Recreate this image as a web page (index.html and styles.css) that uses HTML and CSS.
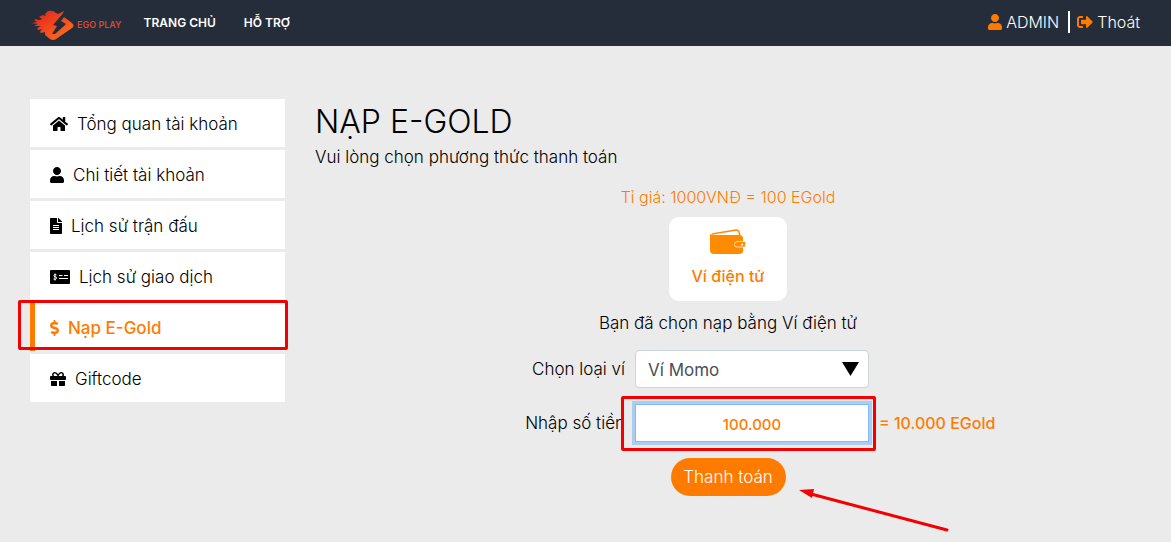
FILE: index.html
```html
<!DOCTYPE html>
<html lang="vi">
<head>
    <meta charset="UTF-8">
    <meta name="viewport" content="width=device-width, initial-scale=1.0">
    <title>Nạp E-Gold - EGO PLAY</title>
    <link rel="stylesheet" href="styles.css">
</head>
<body>
    <header class="navbar">
        <a class="logo" href="#">
            <svg class="logo-mark" viewBox="0 0 46 32" aria-hidden="true">
                <defs>
                    <linearGradient id="flame" x1="0" y1="0" x2="1" y2="1">
                        <stop offset="0" stop-color="#d9221c"/>
                        <stop offset="0.5" stop-color="#f2481f"/>
                        <stop offset="1" stop-color="#ff7a1c"/>
                    </linearGradient>
                </defs>
                <path fill="url(#flame)" d="M33 2L27 5L25 4Q22 1 17 2L14 5L15 7Q11 5 8 8L11 10Q8 12 5 10L3 11L6 13L0 14L7 15L3 17L10 17Q5 19 7 21L11 20Q8 23 10 24L14 23L14 26L19 30Q22 32 25 30L41 19Q44 17 41 14L33 8L30 9Z"/>
                <path fill="#262d3a" d="M34 2L22 16L26 17L21 25L24 25L33 17L35 15L30 12L33 8L31 7Z"/>
            </svg>
            <span>EGO PLAY</span>
        </a>
        <nav class="main-nav">
            <a href="#">TRANG CHỦ</a>
            <a href="#">HỖ TRỢ</a>
        </nav>
        <div class="user-nav">
            <a href="#">
                <svg class="icon" viewBox="0 0 448 512" aria-hidden="true"><path d="M224 256c70.700 0 128-57.300 128-128S294.700 0 224 0 96 57.300 96 128s57.300 128 128 128zm89.600 32h-16.700c-22.200 10.200-46.900 16-72.900 16s-50.600-5.800-72.900-16h-16.700C60.200 288 0 348.200 0 422.400V464c0 26.500 21.500 48 48 48h352c26.500 0 48-21.500 48-48v-41.600c0-74.200-60.200-134.400-134.400-134.400z"/></svg>
                ADMIN
            </a>
            <a href="#">
                <svg class="icon" viewBox="0 0 512 512" aria-hidden="true"><path d="M497 273L329 441c-15 15-41 4.500-41-17v-96H152c-13.300 0-24-10.700-24-24v-96c0-13.300 10.700-24 24-24h136V88c0-21.400 25.900-32 41-17l168 168c9.300 9.400 9.300 24.600 0 34zM192 436v-40c0-6.600-5.400-12-12-12H96c-17.700 0-32-14.300-32-32V160c0-17.700 14.300-32 32-32h84c6.600 0 12-5.400 12-12V76c0-6.600-5.400-12-12-12H96c-53 0-96 43-96 96v192c0 53 43 96 96 96h84c6.600 0 12-5.400 12-12z"/></svg>
                Thoát
            </a>
        </div>
    </header>

    <div class="container">
        <aside class="sidebar">
            <a href="#">
                <svg class="icon" viewBox="0 0 576 512" aria-hidden="true"><path d="M280.400 148.300L96 300.100V464a16 16 0 0 0 16 16l112.100-.3a16 16 0 0 0 15.900-16V368a16 16 0 0 1 16-16h64a16 16 0 0 1 16 16v95.600a16 16 0 0 0 16 16.100L464 480a16 16 0 0 0 16-16V300L295.700 148.300a12.200 12.200 0 0 0-15.300 0zM571.600 251.500L488 182.600V44.100a12 12 0 0 0-12-12h-56a12 12 0 0 0-12 12v72.600L318.500 43a48 48 0 0 0-61 0L4.300 251.500a12 12 0 0 0-1.600 16.900l25.500 31A12 12 0 0 0 45.200 301l235.200-193.700a12.200 12.200 0 0 1 15.300 0L530.900 301a12 12 0 0 0 16.900-1.600l25.500-31a12 12 0 0 0-1.700-16.900z"/></svg>
                Tổng quan tài khoản
            </a>
            <a href="#">
                <svg class="icon" viewBox="0 0 448 512" aria-hidden="true"><path d="M224 256c70.700 0 128-57.300 128-128S294.700 0 224 0 96 57.300 96 128s57.300 128 128 128zm89.600 32h-16.700c-22.200 10.200-46.900 16-72.900 16s-50.600-5.800-72.900-16h-16.700C60.200 288 0 348.200 0 422.400V464c0 26.500 21.500 48 48 48h352c26.500 0 48-21.500 48-48v-41.600c0-74.200-60.200-134.400-134.400-134.400z"/></svg>
                Chi tiết tài khoản
            </a>
            <a href="#">
                <svg class="icon" viewBox="0 0 384 512" aria-hidden="true"><path d="M224 136V0H24C10.700 0 0 10.700 0 24v464c0 13.300 10.700 24 24 24h336c13.300 0 24-10.700 24-24V160H248c-13.200 0-24-10.800-24-24zm64 236c0 6.600-5.400 12-12 12H108c-6.600 0-12-5.400-12-12v-8c0-6.600 5.400-12 12-12h168c6.600 0 12 5.400 12 12v8zm0-64c0 6.600-5.400 12-12 12H108c-6.600 0-12-5.400-12-12v-8c0-6.600 5.400-12 12-12h168c6.600 0 12 5.400 12 12v8zm0-72v8c0 6.600-5.400 12-12 12H108c-6.600 0-12-5.400-12-12v-8c0-6.600 5.400-12 12-12h168c6.600 0 12 5.400 12 12zm96-114.100v6.100H256V0h6.100c6.400 0 12.500 2.500 17 7l97.900 98c4.500 4.500 7 10.600 7 16.900z"/></svg>
                Lịch sử trận đấu
            </a>
            <a href="#">
                <svg class="icon" viewBox="0 0 20 16" aria-hidden="true">
                    <rect y="1" width="20" height="14" rx="1"/>
                    <path fill="none" stroke="#fff" d="M6.500 6Q4 5 4 6.500T5.500 8T6.500 9.500T3.500 10M5 4.500v7M9 6.500h3.500M14 6.500h4M9 9.500h9"/>
                </svg>
                Lịch sử giao dịch
            </a>
            <a class="active" href="#">
                <svg class="icon" viewBox="0 0 288 512" aria-hidden="true"><path d="M209.200 233.400l-108-31.600C88.700 198.200 80 186.500 80 173.500c0-16.300 13.200-29.500 29.500-29.500h66.300c12.200 0 24.200 3.700 34.200 10.500 6.100 4.100 14.300 3.100 19.500-2l34.800-34c7.100-6.900 6.100-18.400-1.800-24.500C238 74.800 207.400 64.100 176 64V16c0-8.800-7.200-16-16-16h-32c-8.800 0-16 7.200-16 16v48h-2.500C45.800 64-5.400 118.700.5 183.600c4.200 46.100 39.400 83.600 83.800 96.600l102.500 30c12.500 3.700 21.200 15.300 21.200 28.300 0 16.300-13.200 29.500-29.500 29.500h-66.300C100 368 88 364.300 78 357.500c-6.100-4.100-14.300-3.100-19.500 2l-34.800 34c-7.100 6.900-6.100 18.400 1.800 24.500 24.500 19.200 55.100 29.900 86.500 30v48c0 8.800 7.200 16 16 16h32c8.800 0 16-7.200 16-16v-48.200c46.600-.9 90.300-28.600 105.700-72.700 21.500-61.600-14.600-124.800-72.500-141.700z"/></svg>
                Nạp E-Gold
            </a>
            <a href="#">
                <svg class="icon" viewBox="0 0 512 512" aria-hidden="true"><path d="M32 448c0 17.700 14.300 32 32 32h160V320H32v128zm256 32h160c17.700 0 32-14.300 32-32V320H288v160zm192-320h-42.100c6.200-12.100 10.100-25.500 10.100-40 0-48.500-39.500-88-88-88-41.600 0-68.500 21.300-103 68.300-34.500-47-61.400-68.300-103-68.300-48.500 0-88 39.500-88 88 0 14.500 3.800 27.900 10.100 40H32c-17.700 0-32 14.300-32 32v80c0 8.800 7.200 16 16 16h480c8.800 0 16-7.200 16-16v-80c0-17.700-14.300-32-32-32zm-326.100 0c-22.100 0-40-17.900-40-40s17.900-40 40-40c19.900 0 34.600 3.300 86.100 80h-86.100zm206.100 0h-86.100c51.400-76.500 65.700-80 86.100-80 22.100 0 40 17.900 40 40s-17.900 40-40 40z"/></svg>
                Giftcode
            </a>
        </aside>

        <main class="content">
            <h1>NẠP E-GOLD</h1>
            <p>Vui lòng chọn phương thức thanh toán</p>

            <p class="rate">Tỉ giá: 1000VNĐ = 100 EGold</p>
            <button type="button" class="method">
                <svg class="wallet" viewBox="0 0 36 26" aria-hidden="true">
                    <path fill="none" stroke="#ff8c00" stroke-width="1.500" d="M2 5L26 1Q28.500 1 29 3L30 7"/>
                    <path fill="#ff8c00" d="M0 5Q2 6 5 6H29Q33 6 33 9V22Q33 25 29 25H4Q0 25 0 21Z"/>
                    <path fill="#ff8c00" stroke="#fff" stroke-width="0.700" d="M27 12.500H35.500V18H27Q24.500 18 24.500 15.500T27 12.500Z"/>
                    <circle cx="32" cy="15.500" r="1" fill="#fff"/>
                </svg>
                Ví điện tử
            </button>
            <p class="chosen">Bạn đã chọn nạp bằng Ví điện tử</p>

            <form>
                <div class="form-row">
                    <label for="wallet">Chọn loại ví</label>
                    <div class="field select-field">
                        <select id="wallet">
                            <option>Ví Momo</option>
                        </select>
                    </div>
                </div>
                <div class="form-row">
                    <label for="amount">Nhập số tiền</label>
                    <div class="field marked">
                        <input type="text" id="amount" value="100.000">
                    </div>
                    <output for="amount">= 10.000 EGold</output>
                </div>
                <div class="submit">
                    <button type="button" class="pay">Thanh toán</button>
                    <svg class="arrow" viewBox="0 0 152 44" aria-hidden="true">
                        <path stroke="#f50000" stroke-width="3" stroke-linecap="round" d="M12 5L148 41"/>
                        <path fill="#f50000" d="M0 1L15 0L13 9Z"/>
                    </svg>
                </div>
            </form>
        </main>
    </div>
</body>
</html>
```

FILE: styles.css
```css
* {
    box-sizing: border-box;
}
body {
    margin: 0;
    background-color: #ebebeb;
    color: #000;
    font-family: Inter, "Noto Sans", sans-serif;
    font-size: 17px;
    font-weight: 300;
    line-height: 24px;
}
a {
    color: inherit;
    text-decoration: none;
}
h1, p {
    margin: 0;
}
.icon {
    height: 16px;
    fill: currentColor;
}

/* Top bar */
.navbar {
    display: flex;
    align-items: center;
    height: 46px;
    padding: 0 31px;
    background-color: #262d3a;
    color: #fff;
}
.logo {
    display: flex;
    align-items: center;
    color: #d9482b;
    font-size: 9px;
    font-weight: 600;
}
.logo-mark {
    width: 46px;
    height: 32px;
    margin-top: 4px;
}
.logo span {
    margin-top: 4px;
}
.main-nav {
    display: flex;
    gap: 28px;
    margin-left: 22px;
    font-size: 12px;
    font-weight: 600;
}
.user-nav {
    display: flex;
    margin: 0 0 3px auto;
    font-size: 16px;
    line-height: 22px;
}
.user-nav a {
    display: flex;
    align-items: center;
    gap: 4px;
}
.user-nav a + a {
    margin-left: 9px;
    padding-left: 7px;
    border-left: 2px solid #fff;
}
.user-nav .icon {
    fill: #ff7b00;
}

/* Layout */
.container {
    display: grid;
    grid-template-columns: 255fr 826fr;
    gap: 30px;
    padding: 53px 30px;
}
.sidebar {
    display: flex;
    flex-direction: column;
    gap: 3px;
}
.sidebar a {
    display: flex;
    align-items: center;
    gap: 9px;
    height: 48px;
    padding: 2px 20px 0;
    background-color: #fff;
}
.sidebar .active {
    position: relative;
    padding-left: 15px;
    border-left: 5px solid #ff7b00;
    color: #ff7b00;
    font-weight: 500;
}

/* Red marks around the current item and the amount */
.active::after,
.marked::after {
    content: "";
    position: absolute;
    border: 3px solid #f50000;
    border-radius: 2px;
    pointer-events: none;
}
.active::after {
    inset: -3px -3px 1px -17px;
}
.marked::after {
    inset: -8px -7px -9px -14px;
}

/* Payment */
.content {
    text-align: center;
}
.content h1 {
    font-size: 32px;
    font-weight: 300;
    line-height: 46px;
    text-align: left;
}
.content h1 + p {
    margin-bottom: 16px;
    text-align: left;
}
.rate {
    color: #ff7b00;
    font-size: 16px;
}
button,
input,
select {
    font: inherit;
}
.method {
    display: inline-flex;
    flex-direction: column;
    align-items: center;
    gap: 9px;
    width: 118px;
    height: 84px;
    margin-top: 8px;
    padding: 12px 0;
    border: 0;
    border-radius: 10px;
    background-color: #fff;
    color: #ff7b00;
    font-size: 16px;
    font-weight: 500;
    vertical-align: top;
}
.wallet {
    width: 36px;
    height: 26px;
}
.chosen {
    margin: 10px 0 15px;
}
.form-row {
    display: grid;
    grid-template-columns: 310fr 234fr 262fr;
    gap: 10px;
    align-items: center;
    margin-bottom: 16px;
}
.form-row label {
    text-align: right;
}
.field {
    position: relative;
}
.field input,
.field select {
    display: block;
    width: 100%;
    height: 38px;
    padding: 2px 12px 0;
    border: 1px solid #ced4da;
    border-radius: 4px;
    background-color: #fff;
    color: #495057;
    font-weight: 400;
    appearance: none;
}
.select-field::after {
    content: "";
    position: absolute;
    top: 12px;
    right: 10px;
    width: 17px;
    height: 14px;
    background-color: #000;
    clip-path: polygon(0 0, 100% 0, 50% 100%);
    pointer-events: none;
}
.field input {
    border-color: #80bdff;
    border-radius: 0;
    box-shadow: 0 0 0 3px #abcdf0;
    color: #ff7b00;
    font-size: 15px;
    font-weight: 500;
    text-align: center;
}
output {
    color: #ff7b00;
    font-size: 16px;
    font-weight: 500;
    text-align: left;
}
.submit {
    position: relative;
    width: 115px;
    margin: 0 auto;
}
.pay {
    width: 100%;
    height: 38px;
    padding: 0;
    border: 0;
    border-radius: 19px;
    background-color: #ff7b00;
    color: #fff;
}
.arrow {
    position: absolute;
    top: 31px;
    left: 128px;
    width: 152px;
    height: 44px;
}
```
